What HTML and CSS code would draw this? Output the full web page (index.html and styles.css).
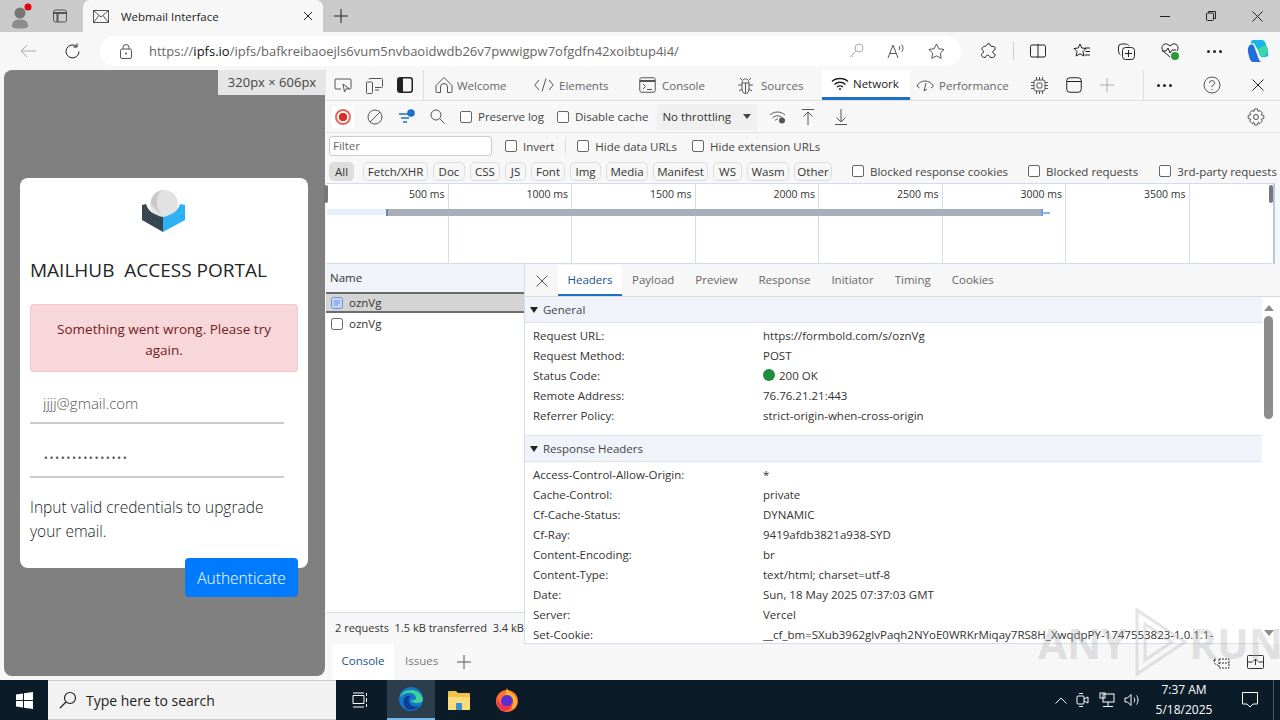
FILE: index.html
```html
<!DOCTYPE html>
<html lang="en">
<head>
    <meta charset="UTF-8">
    <title>Webmail Interface</title>
    <link rel="stylesheet" href="styles.css">
</head>
<body>

    <!-- Browser tab strip -->
    <div class="tabstrip">
        <div class="slot profile">
            <svg width="24" height="28" viewBox="0 0 24 28"><circle cx="10" cy="11" r="5.5" fill="#777"/><path d="M2 25c0-6 3-7.500 8-7.500s8 1.500 8 7.500c-3 2-13 2-16 0z" fill="#8c8c8c"/><circle cx="18" cy="5" r="3.500" fill="#e3000f"/></svg>
        </div>
        <div class="slot tab-actions">
            <svg width="16" height="16" viewBox="0 0 16 16" class="line"><rect x="1.500" y="2" width="13" height="12" rx="2"/><path d="M1.500 5h13M5.500 5v9" stroke-width="2"/></svg>
        </div>
        <div class="tab">
            <svg width="16" height="13" viewBox="0 0 16 13" class="line"><rect x=".5" y=".5" width="15" height="12"/><path d="M.5.500 8 7l7.500-6.500M.5 12.500 6 5.500M15.500 12.500 10 5.500"/></svg>
            <span class="tab-title">Webmail Interface</span>
            <svg width="10" height="10" viewBox="0 0 10 10" class="line dark"><path d="M1 1l8 8M9 1 1 9"/></svg>
        </div>
        <div class="slot new-tab">
            <svg width="14" height="14" viewBox="0 0 14 14" class="line dark"><path d="M7 0v14M0 7h14"/></svg>
        </div>
        <div class="spacer"></div>
        <div class="win-btn"><svg width="10" height="10" viewBox="0 0 10 10" class="line dark"><path d="M0 5.500h10"/></svg></div>
        <div class="win-btn"><svg width="10" height="10" viewBox="0 0 10 10" class="line dark"><rect x=".5" y="2" width="7" height="7.500" rx="1"/><path d="M2.500 2V.5h7v7H8"/></svg></div>
        <div class="win-btn"><svg width="11" height="11" viewBox="0 0 11 11" class="line dark"><path d="M.5.500l10 10M10.500.500l-10 10"/></svg></div>
    </div>

    <!-- Address bar -->
    <div class="toolbar">
        <div class="slot back"><svg width="16" height="14" viewBox="0 0 16 14" class="line faint"><path d="M16 7H1M7 1 1 7l6 6"/></svg></div>
        <div class="slot"><svg width="17" height="17" viewBox="0 0 17 17" class="line dark"><path d="M15 8.500A6.500 6.500 0 1 1 12.500 3.300M13 .5v3.500H9.500"/></svg></div>
        <div class="address">
            <svg class="lock" width="12" height="15" viewBox="0 0 12 15" class="line"><rect x=".5" y="5" width="11" height="9.500" rx="1.500" fill="none" stroke="#555"/><path d="M3 5V3.500a3 3 0 0 1 6 0V5" fill="none" stroke="#555"/><circle cx="6" cy="9.500" r="1" fill="#555"/></svg>
            <span class="url">https://<b>ipfs.io</b>/ipfs/bafkreibaoejls6vum5nvbaoidwdb26v7pwwigpw7ofgdfn42xoibtup4i4/</span>
            <div class="slot-40"><svg width="16" height="16" viewBox="0 0 16 16" class="line faint"><circle cx="11" cy="5" r="4"/><path d="M8 8 1.500 14.500M3.500 12.500l1.500 1.500"/></svg></div>
            <div class="slot-40"><svg width="18" height="16" viewBox="0 0 18 16" class="line"><path d="M1 15 6 2l5 13M3 10.500h6M12 3c1 1 1 3 0 4M14.500 1.500c2 2 2 5.500 0 7.500"/></svg></div>
            <div class="slot-40"><svg width="17" height="16" viewBox="0 0 17 16" class="line"><path d="M8.500 1l2.300 4.700 5.200.8-3.700 3.600.9 5.200-4.700-2.400-4.700 2.400.9-5.200L1 6.500l5.200-.8z"/></svg></div>
        </div>
        <div class="slot"><svg width="16" height="16" viewBox="0 0 16 16" class="line dark"><path d="M6 1.500c1-1 3-1 3.500.5.300 1 0 1.500 1 1.500h2c1 0 1.500.5 1.500 1.500v1.500c0 1-1 .5-1.500 1-1 .7-1 2.500 0 3 .5.500 1.500 0 1.500 1 0 2-1 3-2.500 3h-2c-1 0-.5-1-1-1.500-1-1-3-1-3.500 0-.5.500 0 1.500-1 1.500-2 0-3.500-1-3.500-3 0-1 1-1 1.500-1.500 1-1 .5-2.500-.5-3C1 7 .5 6 1.500 4.500 2.500 3 4 3.500 5 3c.7-.3.500-1 1-1.500z"/></svg></div>
        <div class="tool-sep"></div>
        <div class="slot"><svg width="16" height="14" viewBox="0 0 16 14" class="line dark"><rect x=".5" y="1" width="15" height="12" rx="1.500"/><path d="M8 0v14"/></svg></div>
        <div class="slot"><svg width="18" height="16" viewBox="0 0 18 16" class="line dark"><path d="M7 1l1.800 4 4.200.5-3 3 .8 4.500L7 10.800 3.200 13 4 8.500l-3-3L5.200 5zM12 5h5M12.500 8.500H17M11.500 12H17"/></svg></div>
        <div class="slot"><svg width="17" height="17" viewBox="0 0 17 17" class="line dark"><rect x="4.500" y="4.500" width="12" height="12" rx="3"/><path d="M10.500 7v7M7 10.500h7M2.500 12C1 11 .5 9 .5 7V4a3 3 0 0 1 3-3h4c1.500 0 3 1 3.500 2"/></svg></div>
        <div class="slot pulse"><svg width="18" height="17" viewBox="0 0 18 17" class="line dark"><path d="M9 14 2 8C-1 4 3-1 7 1.500L9 3l2-1.500C15-1 19 4 16 8M1 8h4l2-3 2 5 2-3h4"/><circle cx="14" cy="13" r="4" fill="#2a9a3c" stroke="none"/></svg></div>
        <div class="slot more"><span></span><span></span><span></span></div>
        <div class="slot"><svg width="24" height="26" viewBox="0 0 24 26"><path d="M7 2h9c3 0 4 4 5 8 1 5 3 8-1 9h-4c-2 0-2-2-3-5L9 7C8 5 7 5 5 6c0-2 0-4 2-4z" fill="#1ab5e8"/><path d="M3 8c1-2 4-2 5 0l4 11c1 3 2 5 4 5H8c-3 0-4-2-5-6-1-4-2-7 0-10z" fill="#1f6fd8"/><path d="M17 8c3-1 5 1 5 3 0 4-1 7-4 7h-4l-2-6c1-2 3-3 5-4z" fill="#3dd6a8"/></svg></div>
    </div>

    <div class="main">

        <!-- Emulated page -->
        <div class="gutter">
            <div class="page">
                <div class="size-label">320px × 606px</div>
                <div class="card">
                    <svg class="logo" width="44" height="44" viewBox="0 0 44 44">
                        <circle cx="22" cy="14" r="14" fill="#e2e2e2"/>
                        <path d="M9 14a14 14 0 0 1 12-14C14 3 12 15 20 26z" fill="#c8c8c8"/>
                        <path d="M0 15l4-1c2 7 8 11 17 13v15L0 30z" fill="#37474f"/>
                        <path d="M43 15l-5-1c-2 7-8 11-17 13v15l22-12z" fill="#2fb1f5"/>
                    </svg>
                    <h1>MAILHUB&nbsp; ACCESS PORTAL</h1>
                    <div class="alert">Something went wrong. Please try again.</div>
                    <input class="field" type="email" value="jjjj@gmail.com">
                    <input class="field" type="password" value="aaaaaaaaaaaaaaa">
                    <p class="hint">Input valid credentials to upgrade your email.</p>
                    <button class="auth-btn">Authenticate</button>
                </div>
            </div>
        </div>

        <!-- DevTools -->
        <div class="devtools">
            <div class="dt-tabs">
                <div class="dt-icons">
                    <svg width="18" height="16" viewBox="0 0 18 16" class="line"><path d="M7 12H2a1 1 0 0 1-1-1V3a1 1 0 0 1 1-1h14a1 1 0 0 1 1 1v8a1 1 0 0 1-1 1h-2"/><path d="M9 7l1.500 8 1.500-3 3-.5z"/></svg>
                    <svg width="17" height="17" viewBox="0 0 17 17" class="line"><rect x=".5" y="5" width="6" height="11.500" rx="1"/><path d="M3 2.500a1 1 0 0 1 1-1h11.500a1 1 0 0 1 1 1v7a1 1 0 0 1-1 1H9M9 13h4"/></svg>
                    <svg width="16" height="16" viewBox="0 0 16 16"><rect x=".75" y=".75" width="14.500" height="14.500" rx="2.500" fill="none" stroke="#222" stroke-width="1.500"/><path d="M1 3a2 2 0 0 1 2-2h3v14H3a2 2 0 0 1-2-2z" fill="#222"/></svg>
                </div>
                <div class="dt-tab">
                    <svg width="18" height="18" viewBox="0 0 18 18" class="line"><path d="M1 9.500 9 1.500l8 8v6a1 1 0 0 1-1 1h-3.500V11a3.500 3.500 0 0 0-7 0v5.500H2a1 1 0 0 1-1-1z"/></svg>
                    Welcome
                </div>
                <div class="dt-tab">
                    <svg width="20" height="14" viewBox="0 0 20 14" class="line"><path d="M5 2 .8 7 5 12M15 2l4.200 5L15 12M12 .5 8 13.500"/></svg>
                    Elements
                </div>
                <div class="dt-tab">
                    <svg width="17" height="16" viewBox="0 0 17 16" class="line"><rect x=".75" y=".75" width="15.500" height="14.500" rx="2"/><path d="M1 4h15" stroke-width="2"/><path d="M4 7l2.500 2.500L4 12M8 12.500h5"/></svg>
                    Console
                </div>
                <div class="dt-tab">
                    <svg width="17" height="17" viewBox="0 0 17 17" class="line"><path d="M5 6.500C5 3 6.500 2 8.500 2S12 3 12 6.500V12c0 3-1.500 4.500-3.500 4.500S5 15 5 12zM5 6h7M8.500 6v10M5 3 3 1M12 3l2-2M5 8H1M12 8h4M5 12l-3 2M12 12l3 2"/></svg>
                    Sources
                </div>
                <div class="dt-tab active">
                    <svg width="18" height="13" viewBox="0 0 18 13" class="line dark"><path d="M1 4.500c4-4 12-4 16 0M3.500 7.500c3-3 8-3 11 0M6 10c1.500-1.500 4.500-1.500 6 0" stroke-width="1.400"/><circle cx="9" cy="12" r="1" fill="#222" stroke="none"/></svg>
                    Network
                </div>
                <div class="dt-tab perf">
                    <svg width="19" height="13" viewBox="0 0 19 13" class="line"><path d="M1 7c1.500-3 4.500-5 8-5 3.500 0 6.500 2 8.500 5M1 7l2.500 2M17.500 7 15 9M10 4 8 12l3-2"/></svg>
                    Performance
                </div>
                <div class="dt-more-tabs">
                    <svg width="17" height="17" viewBox="0 0 17 17" class="line"><rect x="3" y="3" width="11" height="11" rx="2"/><rect x="6" y="6" width="5" height="5" rx="1"/><path d="M5.500 0v3M8.500 0v3M11.500 0v3M5.500 14v3M8.500 14v3M11.500 14v3M0 5.500h3M0 8.500h3M0 11.500h3M14 5.500h3M14 8.500h3M14 11.500h3"/></svg>
                    <svg width="16" height="16" viewBox="0 0 16 16" class="line dark"><rect x=".75" y=".75" width="14.500" height="14.500" rx="3"/><path d="M1 4.500h14"/></svg>
                    <svg width="14" height="14" viewBox="0 0 14 14" class="line faint"><path d="M7 0v14M0 7h14"/></svg>
                </div>
                <div class="dt-right">
                    <div class="more"><span></span><span></span><span></span></div>
                    <svg width="18" height="18" viewBox="0 0 18 18" class="line"><circle cx="9" cy="9" r="8"/><path d="M6.500 7a2.500 2.500 0 1 1 3.500 2.300c-.7.300-1 .7-1 1.700M9 13v1.200"/></svg>
                    <svg width="12" height="12" viewBox="0 0 12 12" class="line dark"><path d="M.5.500l11 11M11.500.500l-11 11"/></svg>
                </div>
            </div>

            <div class="net-tools">
                <div class="record"><span></span></div>
                <svg class="t-clear" width="16" height="16" viewBox="0 0 16 16" class="line"><circle cx="8" cy="8" r="7" fill="none" stroke="#555"/><path d="M3 13 13 3" stroke="#555"/></svg>
                <svg class="t-filter" width="18" height="16" viewBox="0 0 18 16"><path d="M1 5h12M3 9h8M5 13h4" stroke="#1a73c4" stroke-width="1.300"/><circle cx="13" cy="4" r="3.800" fill="#1a73c4"/></svg>
                <svg class="t-search" width="15" height="15" viewBox="0 0 15 15" class="line"><circle cx="6" cy="6" r="5" fill="none" stroke="#555"/><path d="M10 10l4.500 4.500" stroke="#555"/></svg>
                <label class="check c-preserve"><input type="checkbox">Preserve log</label>
                <label class="check c-cache"><input type="checkbox">Disable cache</label>
                <div class="throttle">No throttling<i class="caret"></i></div>
                <svg class="t-wifi" width="18" height="14" viewBox="0 0 18 14" class="line"><path d="M1 5c4-4 11-4 15 0M3.500 8c3-3 7-3 10 0M6 10.500c1-1 2-1.500 3-1.500" fill="none" stroke="#555"/><circle cx="13" cy="10.500" r="3" fill="#555"/></svg>
                <svg class="t-up" width="12" height="16" viewBox="0 0 12 16" class="line"><path d="M0 .5h12M6 16V3M1.500 7.500 6 3l4.500 4.500" fill="none" stroke="#555"/></svg>
                <svg class="t-down" width="12" height="16" viewBox="0 0 12 16" class="line"><path d="M0 15.500h12M6 0v13M1.500 8.500 6 13l4.500-4.500" fill="none" stroke="#555"/></svg>
                <svg class="t-gear" width="18" height="18" viewBox="0 0 18 18"><path d="M7.500 1h3l.5 2.500 2-1 2.300 2.300-1 2 2.500.7v3l-2.500.7 1 2-2.300 2.300-2-1-.5 2.500h-3L7 14.500l-2 1-2.300-2.300 1-2L1.200 10.500v-3l2.500-.7-1-2L5 2.500l2 1z" fill="none" stroke="#555"/><circle cx="9" cy="9" r="2.500" fill="none" stroke="#555"/></svg>
            </div>

            <div class="filter-row">
                <div class="filter-input">Filter</div>
                <label class="check f-invert"><input type="checkbox">Invert</label>
                <div class="filter-sep"></div>
                <label class="check"><input type="checkbox">Hide data URLs</label>
                <label class="check f-ext"><input type="checkbox">Hide extension URLs</label>
            </div>

            <div class="chip-row">
                <span class="chip on">All</span>
                <span class="chip w-fetch">Fetch/XHR</span>
                <span class="chip w-doc">Doc</span>
                <span class="chip w-css">CSS</span>
                <span class="chip w-js">JS</span>
                <span class="chip w-font">Font</span>
                <span class="chip w-img">Img</span>
                <span class="chip w-media">Media</span>
                <span class="chip w-manifest">Manifest</span>
                <span class="chip w-ws">WS</span>
                <span class="chip w-wasm">Wasm</span>
                <span class="chip w-other">Other</span>
                <label class="check c-blocked"><input type="checkbox">Blocked response cookies</label>
                <label class="check c-blocked2"><input type="checkbox">Blocked requests</label>
                <label class="check c-third"><input type="checkbox">3rd-party requests</label>
            </div>

            <div class="overview">
                <div class="ov-cell">500 ms</div>
                <div class="ov-cell">1000 ms</div>
                <div class="ov-cell">1500 ms</div>
                <div class="ov-cell">2000 ms</div>
                <div class="ov-cell">2500 ms</div>
                <div class="ov-cell">3000 ms</div>
                <div class="ov-cell">3500 ms</div>
                <div class="ov-cell last"></div>
                <div class="ov-wait"></div>
                <div class="ov-bar"></div>
                <div class="ov-tail"></div>
                <div class="ov-handle left"></div>
                <div class="ov-handle right"></div>
            </div>

            <div class="split">
                <div class="name-pane">
                    <div class="name-head">Name</div>
                    <div class="req selected">
                        <svg width="12" height="12" viewBox="0 0 12 12"><rect x=".5" y=".5" width="11" height="11" rx="2" fill="#c5d4f5" stroke="#6f8fd8"/><path d="M3 4h6M3 6h6M3 8h4" stroke="#6f8fd8"/></svg>
                        oznVg
                    </div>
                    <div class="req">
                        <svg width="12" height="12" viewBox="0 0 12 12"><rect x=".5" y=".5" width="11" height="11" rx="2" fill="#fff" stroke="#666"/></svg>
                        oznVg
                    </div>
                    <div class="name-foot">2 requests&nbsp; 1.5 kB transferred&nbsp; 3.4 kB</div>
                </div>

                <div class="detail">
                    <div class="detail-tabs">
                        <svg class="detail-close" width="12" height="12" viewBox="0 0 12 12" class="line"><path d="M.5.500l11 11M11.500.500l-11 11" stroke="#555"/></svg>
                        <span class="d-tab on">Headers</span>
                        <span class="d-tab">Payload</span>
                        <span class="d-tab">Preview</span>
                        <span class="d-tab">Response</span>
                        <span class="d-tab">Initiator</span>
                        <span class="d-tab">Timing</span>
                        <span class="d-tab">Cookies</span>
                    </div>
                    <div class="detail-body">
                        <div class="sections">
                            <div class="sec-head"><i class="tri"></i>General</div>
                            <div class="sec-rows">
                                <div class="kv"><span>Request URL:</span><span>https://formbold.com/s/oznVg</span></div>
                                <div class="kv"><span>Request Method:</span><span>POST</span></div>
                                <div class="kv"><span>Status Code:</span><span class="status"><i class="dot"></i>200 OK</span></div>
                                <div class="kv"><span>Remote Address:</span><span>76.76.21.21:443</span></div>
                                <div class="kv"><span>Referrer Policy:</span><span>strict-origin-when-cross-origin</span></div>
                            </div>
                            <div class="sec-head ruled"><i class="tri"></i>Response Headers</div>
                            <div class="sec-rows">
                                <div class="kv"><span>Access-Control-Allow-Origin:</span><span>*</span></div>
                                <div class="kv"><span>Cache-Control:</span><span>private</span></div>
                                <div class="kv"><span>Cf-Cache-Status:</span><span>DYNAMIC</span></div>
                                <div class="kv"><span>Cf-Ray:</span><span>9419afdb3821a938-SYD</span></div>
                                <div class="kv"><span>Content-Encoding:</span><span>br</span></div>
                                <div class="kv"><span>Content-Type:</span><span>text/html; charset=utf-8</span></div>
                                <div class="kv"><span>Date:</span><span>Sun, 18 May 2025 07:37:03 GMT</span></div>
                                <div class="kv"><span>Server:</span><span>Vercel</span></div>
                                <div class="kv"><span>Set-Cookie:</span><span>__cf_bm=SXub3962glvPaqh2NYoE0WRKrMiqay7RS8H_XwqdpPY-1747553823-1.0.1.1-</span></div>
                            </div>
                        </div>
                        <div class="scrollbar">
                            <i class="sb-up"></i>
                            <div class="sb-thumb"></div>
                            <i class="sb-down"></i>
                        </div>
                    </div>
                </div>
            </div>

            <div class="drawer">
                <span class="dr-tab on">Console</span>
                <span class="dr-tab">Issues</span>
                <svg width="14" height="14" viewBox="0 0 14 14" class="line"><path d="M7 0v14M0 7h14"/></svg>
                <div class="spacer"></div>
                <svg class="dr-a" width="17" height="14" viewBox="0 0 17 14" class="line"><path d="M6 4h10v9H6zM6 8h10M1 5l2-2.500M1 5h3M1 5c0 3 1 5 4 5" fill="none" stroke="#333" stroke-dasharray="2 1"/></svg>
                <svg class="dr-b" width="17" height="14" viewBox="0 0 17 14" class="line"><rect x=".5" y=".5" width="16" height="13" rx="1" fill="none" stroke="#333"/><path d="M.5 7h5M11.500 7h5M8.500 10V4M6 6.500 8.500 4 11 6.500" fill="none" stroke="#333"/></svg>
            </div>
        </div>
    </div>

    <!-- Windows taskbar -->
    <div class="taskbar">
        <div class="start">
            <svg width="17" height="17" viewBox="0 0 17 17"><path d="M0 2.400 7 1.400V8H0zM8 1.300 17 0v8H8zM0 9h7v6.600l-7-1zM8 9h9v8l-9-1.300z" fill="#fff"/></svg>
        </div>
        <div class="search">
            <svg width="18" height="18" viewBox="0 0 18 18" fill="none" stroke="#222" stroke-width="1.200"><circle cx="11" cy="7" r="5.500"/><path d="M7 11 1 17"/></svg>
            Type here to search
        </div>
        <div class="task-item">
            <svg width="17" height="16" viewBox="0 0 17 16" fill="none" stroke="#fff"><path d="M1 1h11M1 15h11M1 3.500h11v8H1zM14.500 1v3M14.500 6v4M14.500 12v3"/></svg>
        </div>
        <div class="task-item active">
            <svg width="24" height="24" viewBox="0 0 24 24"><circle cx="12" cy="12" r="12" fill="#1477c8"/><path d="M1 10C3 2 20-1 24 12c0 3-3 4-6 4-3 0-6-1-6-3 2 1 5 0 5-2 0-3-3-5-7-5-4 0-7 2-9 4z" fill="#3fd29a"/><path d="M5 12c1-3 4-4 7-3-3 1-3 8 2 10 2 1 4 1 6 0-3 4-9 5-12 3-3-2-4-6-3-10z" fill="#0d3f9a"/></svg>
        </div>
        <div class="task-item">
            <svg width="24" height="22" viewBox="0 0 24 22"><path d="M1 3a1 1 0 0 1 1-1h7l2 2h11a1 1 0 0 1 1 1v15a1 1 0 0 1-1 1H2a1 1 0 0 1-1-1z" fill="#f0c14b"/><path d="M1 8h22v12a1 1 0 0 1-1 1H2a1 1 0 0 1-1-1z" fill="#fbdc7c"/><rect x="9" y="14" width="6" height="7" fill="#3c8fd0"/></svg>
        </div>
        <div class="task-item">
            <svg width="24" height="24" viewBox="0 0 24 24"><circle cx="12" cy="13" r="11" fill="#ff7139"/><path d="M12 0c1 4 5 4 8 8 3 5 2 10-2 13-3-4-10-12-6-21z" fill="#ffb32e"/><circle cx="12" cy="13" r="6" fill="#5b2ed0"/><path d="M2 10c2 6 6 8 10 8 3 0 5-2 6-5 0 6-4 10-8 10-5 0-9-6-8-13z" fill="#f2334f"/></svg>
        </div>
        <div class="spacer"></div>
        <div class="tray">
            <svg width="12" height="7" viewBox="0 0 12 7" fill="none" stroke="#fff"><path d="M.5 6.500 6 1l5.500 5.500"/></svg>
            <svg width="14" height="16" viewBox="0 0 14 16" fill="none" stroke="#fff"><rect x="1" y="4" width="7" height="8" rx="1"/><path d="M8 7l4-2v6l-4-2M3 1.500h4M3 14.500h4"/></svg>
            <svg width="16" height="16" viewBox="0 0 16 16" fill="none" stroke="#fff"><rect x="4" y="2" width="11" height="8"/><rect x="1" y="1" width="5" height="5"/><path d="M9 10v4M4 14.500h10"/></svg>
            <svg width="16" height="14" viewBox="0 0 16 14" fill="none" stroke="#fff"><path d="M1 5h2.500L7 1.500v11L3.500 9H1zM10 4.500c1 1.500 1 3.500 0 5M12.500 2.500c2 2.500 2 6.500 0 9"/></svg>
        </div>
        <div class="clock"><div>7:37 AM</div><div>5/18/2025</div></div>
        <div class="notify">
            <svg width="16" height="16" viewBox="0 0 16 16" fill="none" stroke="#fff"><path d="M.5.500h15v11.500H11l-3 3-3-3H.5z"/></svg>
        </div>
        <div class="show-desktop"></div>
    </div>

    <!-- Watermark -->
    <div class="watermark">
        <span>ANY</span>
        <svg width="62" height="72" viewBox="0 0 62 72" fill="none" stroke="#aaa" stroke-width="3"><path d="M10 4v64l48-32zM18 18v36l27-18z"/></svg>
        <span>RUN</span>
    </div>

</body>
</html>
```

FILE: styles.css
```css
* {
    box-sizing: border-box;
}

body {
    margin: 0;
    width: 1280px;
    height: 720px;
    overflow: hidden;
    display: flex;
    flex-direction: column;
    font-family: "Open Sans", "Noto Sans", sans-serif;
    font-size: 11.5px;
    color: #444;
    background-color: #f7f7f7;
}

svg {
    flex: none;
    display: block;
}

.line {
    fill: none;
    stroke: #555;
}

.line.dark {
    stroke: #222;
}

.line.faint {
    stroke: #aaa;
}

.spacer {
    flex: 1;
}

.slot {
    width: 44px;
    height: 100%;
    flex: none;
    display: flex;
    align-items: center;
    justify-content: center;
}

/* Browser tab strip */
.tabstrip {
    height: 32px;
    display: flex;
    background-color: #cacaca;
}

.tab-actions {
    width: 32px;
}

.tab {
    width: 240px;
    margin-left: 7px;
    padding: 0 10px;
    display: flex;
    align-items: center;
    background-color: #f7f7f7;
    border-radius: 7px 7px 0 0;
    color: #222;
}

.tab-title {
    flex: 1;
    margin-left: 12px;
}

.new-tab {
    width: 36px;
}

.win-btn {
    width: 46px;
    display: flex;
    align-items: center;
    justify-content: center;
}

/* Address bar */
.toolbar {
    height: 38px;
    padding: 2px 0 2px 6px;
    display: flex;
    align-items: center;
}

.address {
    width: 863px;
    height: 30px;
    margin: 0 6px 0 6px;
    padding: 0 5px 0 20px;
    display: flex;
    align-items: center;
    background-color: #fff;
    border-radius: 15px;
}

.url {
    flex: 1;
    margin-left: 17px;
    font-size: 13px;
    color: #666;
}

.url b {
    font-weight: 400;
    color: #111;
}

.slot-40 {
    width: 40px;
    display: flex;
    justify-content: center;
}

.tool-sep {
    width: 1px;
    height: 18px;
    margin: 0 2px;
    background-color: #ccc;
}

.more {
    display: flex;
    align-items: center;
    justify-content: center;
    gap: 3px;
}

.more span {
    width: 3px;
    height: 3px;
    border-radius: 50%;
    background-color: #222;
}

/* Main area */
.main {
    height: 610px;
    display: flex;
}

.gutter {
    width: 326px;
    padding: 0 1px 4px 4px;
}

.page {
    position: relative;
    height: 606px;
    padding: 108px 0 0 16px;
    background-color: #808080;
    border-radius: 8px;
}

.size-label {
    position: absolute;
    top: 0;
    right: -1px;
    width: 108px;
    height: 25px;
    line-height: 25px;
    text-align: center;
    font-size: 13px;
    color: #444;
    background-color: #e6e6e6;
}

/* Login card */
.card {
    width: 288px;
    height: 390px;
    padding: 12px 10px 0;
    background-color: #fff;
    border-radius: 8px;
    font-weight: 300;
    color: #212529;
}

.logo {
    margin: 0 auto;
}

.card h1 {
    margin: 24px 0 0;
    font-size: 19px;
    line-height: 24px;
    font-weight: 400;
    white-space: nowrap;
}

.alert {
    height: 68px;
    margin-top: 22px;
    padding: 14px 12px;
    font-size: 13.500px;
    line-height: 21px;
    text-align: center;
    font-weight: 400;
    color: #721c24;
    background-color: #f8d7da;
    border: 1px solid #f5c6cb;
    border-radius: 3px;
}

.field {
    display: block;
    width: 254px;
    height: 40px;
    margin-top: 14px;
    padding: 0 13px;
    border: 0;
    border-bottom: 2px solid #ccc;
    outline: none;
    font-family: inherit;
    font-size: 15px;
    font-weight: 300;
    color: #555;
    background: none;
}

.alert + .field {
    margin-top: 12px;
}

.hint {
    margin: 17px 0 0;
    font-size: 15.500px;
    line-height: 24px;
}

.auth-btn {
    display: block;
    width: 113px;
    height: 39px;
    margin: 15px 0 0 auto;
    border: 0;
    border-radius: 4px;
    font-family: inherit;
    font-size: 15.500px;
    font-weight: 300;
    color: #fff;
    background-color: #007bff;
}

/* DevTools */
.devtools {
    flex: 1;
    min-width: 0;
    display: flex;
    flex-direction: column;
}

.dt-tabs {
    height: 31px;
    display: flex;
    border-bottom: 1px solid #e2e2e2;
}

.dt-icons {
    width: 98px;
    padding: 0 0 0 8px;
    display: flex;
    align-items: center;
    gap: 14px;
    border-right: 1px solid #ddd;
}

.dt-tab {
    display: flex;
    align-items: center;
    gap: 4px;
    padding-left: 7px;
    color: #666;
}

.dt-tab:nth-child(2) { width: 100px; padding-left: 11px; }
.dt-tab:nth-child(3) { width: 107px; padding-left: 10px; gap: 5px; }
.dt-tab:nth-child(4) { width: 101px; padding-left: 8px; gap: 6px; }
.dt-tab:nth-child(5) { width: 90px; padding-left: 5px; gap: 7px; }

.dt-tab.active {
    width: 88px;
    padding-left: 9px;
    color: #222;
    background-color: #fff;
    border-bottom: 3px solid #1a73c4;
}

.dt-tab.perf {
    width: 115px;
    padding-left: 6px;
}

.dt-more-tabs {
    width: 118px;
    display: flex;
    align-items: center;
    gap: 18px;
    padding-left: 6px;
}

.dt-right {
    flex: 1;
    display: flex;
    align-items: center;
    justify-content: space-between;
    padding: 0 16px 0 13px;
    border-left: 1px solid #ddd;
}

.net-tools {
    height: 32px;
    display: flex;
    align-items: center;
    border-bottom: 1px solid #e4e4e4;
}

.record {
    width: 22px;
    height: 22px;
    margin-left: 6px;
    padding: 3px;
    background-color: #fff;
}

.record span {
    display: block;
    width: 16px;
    height: 16px;
    border: 2px solid #e46962;
    border-radius: 50%;
    background: radial-gradient(circle, #d93025 4px, #fff 4.500px);
}

.t-clear { margin-left: 13px; }
.t-filter { margin-left: 15px; }
.t-search { margin-left: 14px; }
.t-wifi { margin-left: 12px; }
.t-up { margin-left: 15px; }
.t-down { margin-left: 21px; }
.t-gear { margin-left: auto; margin-right: 15px; }

.check {
    display: flex;
    align-items: center;
    gap: 6px;
    white-space: nowrap;
    color: #444;
}

.check input {
    appearance: none;
    width: 12px;
    height: 12px;
    margin: 0;
    background-color: #fff;
    border: 1px solid #666;
    border-radius: 2px;
}

.c-preserve { margin-left: 15px; }
.c-cache { margin-left: 13px; }

.throttle {
    width: 100px;
    height: 26px;
    margin-left: 9px;
    padding: 0 6px 0 5px;
    display: flex;
    align-items: center;
    justify-content: space-between;
    color: #333;
    background-color: #f0f0f0;
}

.caret {
    width: 0;
    height: 0;
    border: 4px solid transparent;
    border-top: 5px solid #444;
    border-bottom: 0;
}

.filter-row {
    height: 26px;
    padding-left: 3px;
    display: flex;
    align-items: center;
}

.filter-input {
    width: 163px;
    height: 20px;
    padding-left: 3px;
    line-height: 18px;
    color: #666;
    background-color: #fff;
    border: 1px solid #ccc;
    border-radius: 3px;
}

.f-invert { margin-left: 13px; }

.filter-sep {
    width: 1px;
    height: 16px;
    margin: 0 11px;
    background-color: #ddd;
}

.f-ext { margin-left: 15px; }

.chip-row {
    height: 24px;
    padding-left: 3px;
    display: flex;
    align-items: center;
    gap: 5px;
}

.chip {
    height: 19px;
    line-height: 17px;
    text-align: center;
    color: #333;
    border: 1px solid #ddd;
    border-radius: 5px;
    white-space: nowrap;
}

.chip.on {
    width: 25px;
    margin-right: 4px;
    border-color: #ddd;
    background-color: #ddd;
}

.w-fetch { width: 65px; }
.w-doc { width: 32px; }
.w-css { width: 30px; }
.w-js { width: 21px; }
.w-font { width: 34px; }
.w-img { width: 31px; }
.w-media { width: 42px; }
.w-manifest { width: 55px; }
.w-ws { width: 29px; }
.w-wasm { width: 42px; }
.w-other { width: 38px; }

.c-blocked { margin-left: 15px; }
.c-blocked2 { margin-left: 15px; }
.c-third { margin-left: 16px; }

/* Timeline overview */
.overview {
    position: relative;
    width: 949px;
    height: 81px;
    display: grid;
    grid-template-columns: 122.500px repeat(6, 123.500px) 1fr;
    background-color: #fff;
    border-top: 1px solid #d5dcea;
    border-bottom: 1px solid #d5dcea;
    border-right: 2px solid #b5c8ea;
}

.ov-cell {
    padding: 3px 3px 0 0;
    text-align: right;
    font-size: 10.500px;
    color: #333;
    border-right: 1px solid #d5dcea;
}

.ov-cell.last {
    border-right: 0;
}

.ov-wait,
.ov-bar,
.ov-tail,
.ov-handle {
    position: absolute;
}

.ov-wait {
    top: 25px;
    left: 1px;
    width: 59px;
    height: 6px;
    background-color: #e6f0fb;
}

.ov-bar {
    top: 25px;
    left: 60px;
    width: 657px;
    height: 7px;
    background-color: #a7afbb;
    border-left: 2px solid #6f87a8;
    border-right: 2px solid #6f9fe0;
}

.ov-tail {
    top: 28px;
    left: 717px;
    width: 7px;
    height: 2px;
    background-color: #8ab4ee;
}

.ov-handle {
    top: 1px;
    width: 4px;
    height: 18px;
    background-color: #777;
    border-radius: 2px;
}

.ov-handle.left { left: -2px; }
.ov-handle.right { right: 0; }

/* Request list and detail */
.split {
    height: 380px;
    display: flex;
}

.name-pane {
    width: 199px;
    display: flex;
    flex-direction: column;
    background-color: #fff;
    border-right: 1px solid #d5dcea;
}

.name-head {
    height: 28px;
    padding-left: 4px;
    line-height: 27px;
    color: #333;
    background-color: #f0f4fa;
}

.req {
    height: 21px;
    padding-left: 5px;
    display: flex;
    align-items: center;
    gap: 6px;
    color: #333;
}

.req.selected {
    background-color: #d4d4d4;
    border-top: 2px solid #6b6b6b;
    border-bottom: 2px solid #6b6b6b;
}

.name-foot {
    height: 32px;
    margin-top: auto;
    padding-left: 9px;
    line-height: 30px;
    font-size: 11px;
    white-space: nowrap;
    overflow: hidden;
    color: #333;
    background-color: #f7f7f7;
    border-top: 1px solid #d5dcea;
}

.detail {
    flex: 1;
    min-width: 0;
    display: flex;
    flex-direction: column;
}

.detail-tabs {
    height: 33px;
    padding-left: 11px;
    display: flex;
    align-items: flex-end;
    border-bottom: 1px solid #dcdcdc;
}

.detail-close {
    margin: 0 10px 9px 0;
}

.d-tab {
    height: 31px;
    padding: 0 10px;
    margin-right: 1px;
    line-height: 29px;
    color: #666;
}

.d-tab.on {
    width: 64px;
    margin-right: 0;
    text-align: center;
    padding: 0;
    color: #1f4f8f;
    background-color: #fff;
    border-bottom: 2px solid #1a73c4;
}

.detail-body {
    flex: 1;
    display: flex;
    min-height: 0;
    overflow: hidden;
    background-color: #fff;
}

.sections {
    flex: 1;
    min-width: 0;
    overflow: hidden;
    border-bottom: 1px solid #d5dcea;
}

.sec-head {
    height: 26px;
    padding-left: 5px;
    display: flex;
    align-items: center;
    gap: 5px;
    color: #444;
    background-color: #f0f4fa;
    border-bottom: 1px solid #dde3ee;
}

.sec-head.ruled {
    border-top: 1px solid #dde3ee;
    height: 27px;
}

.tri {
    width: 0;
    height: 0;
    border: 4px solid transparent;
    border-top: 6px solid #222;
    border-bottom: 0;
}

.sec-rows {
    padding: 2px 0 10px;
}

.kv {
    height: 20px;
    padding-left: 8px;
    display: grid;
    grid-template-columns: 230px 1fr;
    align-items: center;
    white-space: nowrap;
    color: #333;
}

.status {
    display: flex;
    align-items: center;
    gap: 4px;
}

.dot {
    width: 12px;
    height: 12px;
    border-radius: 50%;
    background-color: #1e8e3e;
}

.scrollbar {
    width: 18px;
    padding: 8px 7px 8px 2px;
    display: flex;
    flex-direction: column;
    align-items: center;
    background-color: #fff;
}

.sb-thumb {
    width: 9px;
    height: 103px;
    margin-top: 5px;
    background-color: #8d8d8d;
    border-radius: 5px;
}

.sb-up,
.sb-down {
    width: 0;
    height: 0;
    border: 5px solid transparent;
}

.sb-up {
    border-top: 0;
    border-bottom: 6px solid #8d8d8d;
}

.sb-down {
    margin-top: auto;
    border-bottom: 0;
    border-top: 6px solid #8d8d8d;
}

/* Bottom drawer */
.drawer {
    height: 36px;
    padding: 0 16px 0 6px;
    display: flex;
    align-items: center;
}

.dr-tab {
    height: 100%;
    padding: 0 10px;
    line-height: 33px;
    color: #777;
}

.dr-tab.on {
    width: 62px;
    padding: 0;
    margin-right: 1px;
    text-align: center;
    color: #1f4f8f;
    background-color: #fff;
}

.drawer > svg:first-of-type {
    margin-left: 9px;
}

.dr-b {
    margin-left: 17px;
}

/* Taskbar */
.taskbar {
    height: 40px;
    display: flex;
    background-color: #0b1b28;
    color: #fff;
}

.start {
    width: 48px;
    display: flex;
    align-items: center;
    justify-content: center;
}

.search {
    width: 288px;
    padding-left: 11px;
    display: flex;
    align-items: center;
    gap: 9px;
    font-size: 14px;
    color: #222;
    background-color: #f2f2f2;
    border: 1px solid #ccc;
    border-width: 1px 0;
}

.task-item {
    width: 48px;
    display: flex;
    align-items: center;
    justify-content: center;
}

.search + .task-item {
    margin-right: 3px;
}

.task-item.active {
    background-color: #2c3e4c;
    border-bottom: 2px solid #76b9ed;
}

.tray {
    display: flex;
    align-items: center;
    gap: 9px;
}

.clock {
    width: 88px;
    margin-left: 0;
    display: flex;
    flex-direction: column;
    justify-content: center;
    align-items: center;
    font-size: 12px;
    line-height: 20px;
}

.notify {
    width: 44px;
    display: flex;
    align-items: center;
    justify-content: center;
}

.show-desktop {
    width: 7px;
    border-left: 1px solid #4a5762;
    margin-left: 1px;
}

/* Watermark over everything */
.watermark {
    position: absolute;
    left: 1038px;
    top: 606px;
    width: 195px;
    height: 72px;
    display: flex;
    align-items: center;
    justify-content: space-between;
    font-size: 42px;
    font-weight: 700;
    color: #aaa;
    opacity: .3;
    pointer-events: none;
}
```
